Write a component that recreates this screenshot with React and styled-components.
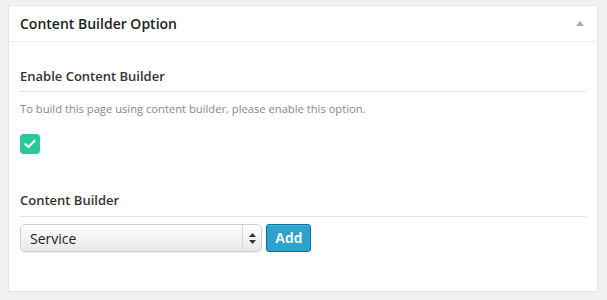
import React from 'react';
import styled, { createGlobalStyle } from 'styled-components';

const GlobalStyle = createGlobalStyle`
  html, body {
    margin: 0;
    padding: 0;
    background: #f1f1f1;
    font-family: 'Open Sans', 'Liberation Sans', sans-serif;
    color: #222;
  }
`;

const Panel = styled.div`
  box-sizing: border-box;
  width: 590px;
  height: 287px;
  margin: 5px 0 0 8px;
  background: #fff;
  border: 1px solid #e5e5e5;
  box-shadow: 0 1px 1px rgba(0, 0, 0, 0.04);
`;

const Header = styled.div`
  display: flex;
  align-items: center;
  justify-content: space-between;
  height: 35px;
  padding: 0 13px 0 11px;
  border-bottom: 1px solid #eee;
`;

const Title = styled.h3`
  margin: 0;
  font-size: 14px;
  font-weight: 600;
  color: #222;
`;

const Toggle = styled.span`
  width: 0;
  height: 0;
  border-left: 4px solid transparent;
  border-right: 4px solid transparent;
  border-bottom: 5px solid #aaa;
`;

const Body = styled.div`
  padding: 24px 11px 0;
`;

const Field = styled.div`
  margin-bottom: ${(props) => props.gap || 0}px;
`;

const FieldTitle = styled.div`
  font-size: 13px;
  font-weight: 600;
  color: #333;
  line-height: 20px;
  padding-bottom: ${(props) => props.pad || 5}px;
  border-bottom: 1px solid #e1e1e1;
`;

const Description = styled.p`
  margin: 9px 0 0;
  font-size: 11.2px;
  color: #888;
  line-height: 16px;
`;

const CheckBox = styled.span`
  display: flex;
  align-items: center;
  justify-content: center;
  width: 20px;
  height: 20px;
  margin-top: 17px;
  border-radius: 4px;
  background: #27c89a;
`;

const Row = styled.div`
  display: flex;
  align-items: center;
  gap: 4px;
  margin-top: 7px;
`;

const Select = styled.div`
  box-sizing: border-box;
  display: flex;
  align-items: stretch;
  width: 242px;
  height: 28px;
  border: 1px solid #cfcfcf;
  border-radius: 5px;
  background: linear-gradient(#fdfdfd, #e9e9e9);
  box-shadow: inset 0 1px 0 #fff, 0 1px 1px rgba(0, 0, 0, 0.06);
`;

const SelectValue = styled.span`
  flex: 1;
  display: flex;
  align-items: center;
  padding-left: 9px;
  font-size: 14px;
  color: #222;
`;

const SelectArrows = styled.span`
  display: flex;
  align-items: center;
  justify-content: center;
  width: 18px;
  border-left: 1px solid #d6d6d6;
`;

const Button = styled.button`
  box-sizing: border-box;
  height: 28px;
  padding: 0 8px;
  border: 1px solid #0074a2;
  border-radius: 3px;
  background: #2ea2cc;
  color: #fff;
  font-family: 'Liberation Sans', 'Open Sans', sans-serif;
  font-size: 14px;
  font-weight: 700;
  box-shadow: inset 0 1px 0 rgba(120, 200, 230, 0.5);
`;

const App = () => {
  return (
    <>
      <GlobalStyle />
      <Panel>
        <Header>
          <Title>Content Builder Option</Title>
          <Toggle />
        </Header>
        <Body>
          <Field gap={36}>
            <FieldTitle>Enable Content Builder</FieldTitle>
            <Description>
              To build this page using content builder, please enable this option.
            </Description>
            <CheckBox>
              <svg width="12" height="10" viewBox="0 0 12 10">
                <path
                  d="M1.5 5.2 L4.5 8 L10.5 1.8"
                  fill="none"
                  stroke="#fff"
                  strokeWidth="2.2"
                  strokeLinecap="round"
                  strokeLinejoin="round"
                />
              </svg>
            </CheckBox>
          </Field>
          <Field>
            <FieldTitle pad={6}>Content Builder</FieldTitle>
            <Row>
              <Select>
                <SelectValue>Service</SelectValue>
                <SelectArrows>
                  <svg width="7" height="11" viewBox="0 0 7 11">
                    <path d="M3.5 0 L7 4 L0 4 Z" fill="#333" />
                    <path d="M3.5 11 L7 7 L0 7 Z" fill="#333" />
                  </svg>
                </SelectArrows>
              </Select>
              <Button>Add</Button>
            </Row>
          </Field>
        </Body>
      </Panel>
    </>
  );
};

export default App;
